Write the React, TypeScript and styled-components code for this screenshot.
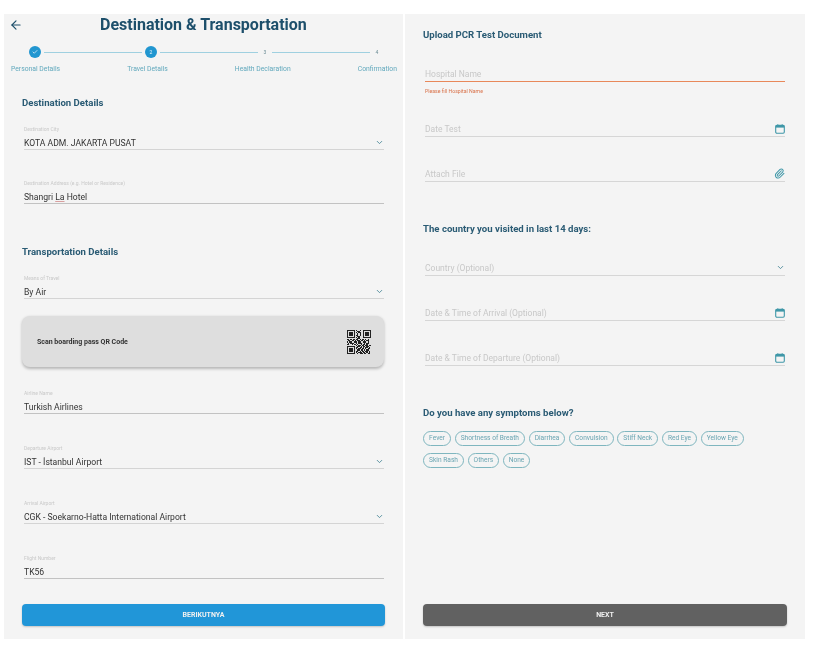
import { ArrowLeft, Check, ChevronDown, Paperclip } from 'lucide-react'
import styled, { createGlobalStyle } from 'styled-components'

const GlobalStyle = createGlobalStyle`
  html, body {
    margin: 0;
    padding: 0;
    background: #ffffff;
    font-family: Roboto, "Liberation Sans", sans-serif;
  }
`

const symptoms = [
  ['Fever', 'Shortness of Breath', 'Diarrhea', 'Convulsion', 'Stiff Neck', 'Red Eye', 'Yellow Eye'],
  ['Skin Rash', 'Others', 'None'],
]

// modules of the QR drawing outside the three finder squares
const qrBits = [
  '........1.01.........',
  '........011..........',
  '........10110........',
  '........0101.........',
  '........1101.........',
  '........011..........',
  '........101..........',
  '........0110.........',
  '1101011011010110101',
  '0110110101101101011',
  '1011001110110011101',
  '0101110010111001011',
  '1100101101001011010',
  '........1011011011011',
  '........011010110110',
  '........110110101101',
  '........101101101011',
  '........011011010110',
  '........110101101101',
  '........101110110101',
  '........010111011011',
]

function QrCode() {
  const cells: [number, number][] = []
  qrBits.forEach((row, y) => {
    row.split('').forEach((c, x) => {
      if (c === '1') cells.push([x, y])
    })
  })
  const finder = (x: number, y: number) => (
    <g key={`${x}-${y}`}>
      <rect x={x + 0.5} y={y + 0.5} width={6} height={6} fill="none" stroke="#222" />
      <rect x={x + 2} y={y + 2} width={3} height={3} fill="#222" />
    </g>
  )
  return (
    <svg width="24" height="24" viewBox="0 0 21 21" shapeRendering="crispEdges">
      {finder(0, 0)}
      {finder(14, 0)}
      {finder(0, 14)}
      {cells.map(([x, y]) => (
        <rect key={`${x}:${y}`} x={x} y={y} width={1} height={1} fill="#222" />
      ))}
    </svg>
  )
}

function CalendarIcon() {
  return (
    <svg width="10" height="10" viewBox="0 0 10 10" fill="none">
      <rect x="0.7" y="1.4" width="8.6" height="7.9" rx="1.2" stroke="#3f97a8" strokeWidth="1.1" />
      <rect x="0.7" y="1.4" width="8.6" height="2.2" fill="#3f97a8" />
      <path d="M2.8 0.3v1.6M7.2 0.3v1.6" stroke="#3f97a8" strokeWidth="1" />
    </svg>
  )
}

export default function App() {
  return (
    <>
      <GlobalStyle />
      <Page>
        <Panel>
          <TitleRow>
            <BackButton>
              <ArrowLeft size={14} strokeWidth={2} />
            </BackButton>
            <Title>Destination &amp; Transportation</Title>
          </TitleRow>
          <Stepper>
            <Dot>
              <Check size={6} strokeWidth={3} />
            </Dot>
            <StepLine />
            <Dot>2</Dot>
            <StepLine />
            <StepNum>3</StepNum>
            <StepLine />
            <StepNum>4</StepNum>
          </Stepper>
          <StepLabels>
            <span>Personal Details</span>
            <span>Travel Details</span>
            <span>Health Declaration</span>
            <span>Confirmation</span>
          </StepLabels>

          <LeftBody>
            <SectionTitle $top={22}>Destination Details</SectionTitle>
            <Field $top={16}>
              <SmallLabel>Destination City</SmallLabel>
              <Value>KOTA ADM. JAKARTA PUSAT</Value>
              <Caret>
                <ChevronDown size={9} strokeWidth={2.4} />
              </Caret>
            </Field>
            <Field $top={30} $thick>
              <SmallLabel>Destination Address (e.g. Hotel or Residence)</SmallLabel>
              <Value>
                Shangri <Misspelt>La</Misspelt> Hotel
              </Value>
            </Field>

            <SectionTitle $top={41}>Transportation Details</SectionTitle>
            <Field $top={16}>
              <SmallLabel>Means of Travel</SmallLabel>
              <Value>By Air</Value>
              <Caret>
                <ChevronDown size={9} strokeWidth={2.4} />
              </Caret>
            </Field>
            <ScanCard>
              <ScanText>Scan boarding pass QR Code</ScanText>
              <QrCode />
            </ScanCard>
            <Field $top={23} $thick>
              <SmallLabel>Airline Name</SmallLabel>
              <Value>Turkish Airlines</Value>
            </Field>
            <Field $top={31}>
              <SmallLabel>Departure Airport</SmallLabel>
              <Value>IST - İstanbul Airport</Value>
              <Caret>
                <ChevronDown size={9} strokeWidth={2.4} />
              </Caret>
            </Field>
            <Field $top={31}>
              <SmallLabel>Arrival Airport</SmallLabel>
              <Value>CGK - Soekarno-Hatta International Airport</Value>
              <Caret>
                <ChevronDown size={9} strokeWidth={2.4} />
              </Caret>
            </Field>
            <Field $top={31} $thick>
              <SmallLabel>Flight Number</SmallLabel>
              <Value>TK56</Value>
            </Field>
          </LeftBody>
          <ActionButton $bg="#2196d8">BERIKUTNYA</ActionButton>
        </Panel>

        <Panel>
          <RightBody>
            <SectionTitle $top={14}>Upload PCR Test Document</SectionTitle>
            <InputRow $top={26} $error>
              <Placeholder>Hospital Name</Placeholder>
            </InputRow>
            <ErrorText>Please fill Hospital Name</ErrorText>
            <InputRow $top={28}>
              <Placeholder>Date Test</Placeholder>
              <CalendarIcon />
            </InputRow>
            <InputRow $top={31}>
              <Placeholder>Attach File</Placeholder>
              <ClipIcon>
                <Paperclip size={11} strokeWidth={2.2} />
              </ClipIcon>
            </InputRow>

            <SectionTitle $top={40}>The country you visited in last 14 days:</SectionTitle>
            <InputRow $top={26}>
              <Placeholder>Country (Optional)</Placeholder>
              <ChevronDown size={9} strokeWidth={2.4} color="#4d8a9a" />
            </InputRow>
            <InputRow $top={31}>
              <Placeholder>Date &amp; Time of Arrival (Optional)</Placeholder>
              <CalendarIcon />
            </InputRow>
            <InputRow $top={31}>
              <Placeholder>Date &amp; Time of Departure (Optional)</Placeholder>
              <CalendarIcon />
            </InputRow>

            <SectionTitle $top={40}>Do you have any symptoms below?</SectionTitle>
            <Chips>
              {symptoms.map((row) => (
                <ChipRow key={row[0]}>
                  {row.map((s) => (
                    <Chip key={s}>{s}</Chip>
                  ))}
                </ChipRow>
              ))}
            </Chips>
          </RightBody>
          <ActionButton $bg="#616161">NEXT</ActionButton>
        </Panel>
      </Page>
    </>
  )
}

const Page = styled.div`
  width: 815px;
  height: 645px;
  box-sizing: border-box;
  padding: 14px 10px 6px 4px;
  display: grid;
  grid-template-columns: 399px 400px;
  gap: 2px;
  overflow: hidden;
  filter: blur(0.45px);
`

const Panel = styled.section`
  background: #f4f4f4;
  display: flex;
  flex-direction: column;
  min-height: 0;
  position: relative;
`

const TitleRow = styled.div`
  height: 21px;
  display: flex;
  align-items: center;
  padding-left: 5px;
`

const BackButton = styled.span`
  display: flex;
  color: #1d4f6b;
  width: 91px;
`

const Title = styled.h1`
  margin: 0;
  font-size: 16px;
  line-height: 21px;
  font-weight: 700;
  color: #1d4f6b;
  white-space: nowrap;
`

const Stepper = styled.div`
  margin: 11px 0 0 25px;
  width: 352px;
  height: 12px;
  display: flex;
  align-items: center;
  gap: 3px;
`

const Dot = styled.span`
  flex: none;
  width: 12px;
  height: 12px;
  border-radius: 50%;
  background: #2196d0;
  color: #e8f4fb;
  font-size: 5px;
  display: flex;
  align-items: center;
  justify-content: center;
`

const StepLine = styled.span`
  flex: 1;
  height: 1px;
  background: #9fd0e0;
`

const StepNum = styled.span`
  flex: none;
  width: 8px;
  text-align: center;
  font-size: 5px;
  color: #6d8d96;
`

const StepLabels = styled.div`
  margin: 6px 6px 0 7px;
  display: flex;
  justify-content: space-between;
  font-size: 6.8px;
  line-height: 10px;
  color: #62a9bd;
`

const LeftBody = styled.div`
  padding: 0 19px 0 18px;
  flex: 1;
`

const RightBody = styled.div`
  padding: 0 20px 0 18px;
  flex: 1;
`

const SectionTitle = styled.h2<{ $top: number }>`
  margin: ${(p) => p.$top}px 0 0;
  font-size: 9.6px;
  line-height: 14px;
  font-weight: 700;
  color: #2a5b74;
  white-space: nowrap;
`

const Field = styled.div<{ $top: number; $thick?: boolean }>`
  position: relative;
  margin: ${(p) => p.$top}px 0 0 2px;
  height: 24px;
  box-sizing: border-box;
  border-bottom: ${(p) => (p.$thick ? '1.5px solid #c2c2c2' : '1px solid #d4d4d4')};
  display: flex;
  flex-direction: column;
`

const SmallLabel = styled.span`
  font-size: 5px;
  line-height: 7px;
  color: #c9c9c9;
  white-space: nowrap;
`

const Value = styled.span`
  font-size: 8.6px;
  line-height: 12px;
  margin-top: 3.5px;
  color: #333333;
  white-space: nowrap;
`

const Misspelt = styled.span`
  text-decoration: underline solid #d9a0a0 0.7px;
`

const Caret = styled.span`
  position: absolute;
  right: 0;
  top: 12px;
  color: #4d8a9a;
  display: flex;
`

const ScanCard = styled.div`
  margin-top: 17px;
  height: 51px;
  box-sizing: border-box;
  padding: 0 13px 0 15px;
  border-radius: 8px;
  background: #dedede;
  box-shadow: 0 1.5px 3px rgba(0, 0, 0, 0.25);
  display: flex;
  align-items: center;
  justify-content: space-between;
`

const ScanText = styled.span`
  font-size: 7px;
  font-weight: 700;
  color: #333333;
`

const ActionButton = styled.button<{ $bg: string }>`
  margin: 0 18px 13px;
  height: 22px;
  flex: none;
  border: none;
  border-radius: 4px;
  padding: 0;
  background: ${(p) => p.$bg};
  box-shadow: 0 1px 2px rgba(0, 0, 0, 0.2);
  color: #f0f0f0;
  font-family: inherit;
  font-size: 7px;
  font-weight: 700;
`

const InputRow = styled.div<{ $top: number; $error?: boolean }>`
  margin: ${(p) => p.$top}px 0 0 2px;
  height: 11px;
  padding-bottom: 2px;
  border-bottom: 1px solid ${(p) => (p.$error ? '#e8885a' : '#d6d6d6')};
  display: flex;
  align-items: center;
  justify-content: space-between;
`

const Placeholder = styled.span`
  font-size: 8.5px;
  color: #c8c8c8;
  white-space: nowrap;
`

const ClipIcon = styled.span`
  display: flex;
  color: #3f97a8;
`

const ErrorText = styled.div`
  margin: 6px 0 0 2px;
  font-size: 5.2px;
  line-height: 7px;
  color: #d9724a;
`

const Chips = styled.div`
  margin-top: 11px;
  display: flex;
  flex-direction: column;
  gap: 7px;
`

const ChipRow = styled.div`
  display: flex;
  gap: 3.5px;
`

const Chip = styled.span`
  height: 15px;
  box-sizing: border-box;
  padding: 0 5.1px;
  border: 1px solid #7fb6bf;
  border-radius: 8px;
  font-size: 6.6px;
  line-height: 13px;
  color: #6aa5b2;
  white-space: nowrap;
`
